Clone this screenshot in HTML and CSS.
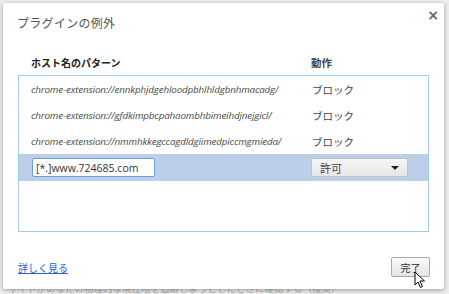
FILE: index.html
```html
<!DOCTYPE html>
<html lang="ja">
<head>
    <meta charset="UTF-8">
    <title>プラグインの例外</title>
    <link rel="stylesheet" href="styles.css">
</head>
<body>
    <div class="backdrop">
        <div class="dialog">
            <div class="title-bar">
                <h1>プラグインの例外</h1>
                <span class="close">×</span>
            </div>

            <div class="head-row">
                <span class="col-pattern">ホスト名のパターン</span>
                <span class="col-action">動作</span>
            </div>

            <div class="list">
                <div class="row">
                    <span class="col-pattern url">chrome-extension://ennkphjdgehloodpbhlhldgbnhmacadg/</span>
                    <span class="col-action">ブロック</span>
                </div>
                <div class="row">
                    <span class="col-pattern url">chrome-extension://gfdkimpbcpahaombhbimeihdjnejgicl/</span>
                    <span class="col-action">ブロック</span>
                </div>
                <div class="row">
                    <span class="col-pattern url">chrome-extension://nmmhkkegccagdldgiimedpiccmgmieda/</span>
                    <span class="col-action">ブロック</span>
                </div>
                <div class="row selected">
                    <div class="col-pattern"><input type="text" class="host-input" value="[*.]www.724685.com"></div>
                    <div class="col-action">
                        <div class="select">
                            <span>許可</span>
                            <span class="arrow"></span>
                        </div>
                    </div>
                </div>
            </div>

            <div class="footer">
                <a href="#" class="more">詳しく見る</a>
                <button class="done">完了</button>
            </div>

            <!-- mouse pointer over the done button -->
            <svg class="cursor" width="12" height="18" viewBox="0 0 12 18">
                <path d="M1 1 L1 14 L4 11 L6.5 16.5 L8.5 15.5 L6 10 L10.5 10 Z" fill="#fff" stroke="#000" stroke-width="1" stroke-linejoin="round"/>
            </svg>
        </div>
        <p class="behind">サイトがあなたの物理的な現在地を追跡しようとしたときに確認する（推奨）</p>
    </div>
</body>
</html>
```

FILE: styles.css
```css
body {
    margin: 0;
    background: #ededed;
    font-family: "Noto Sans CJK JP", "Noto Sans", sans-serif;
    font-size: 12px;
    color: #333;
    overflow: hidden;
}
.backdrop {
    width: 449px;
    height: 294px;
    padding: 3px 0 0 3px;
    box-sizing: border-box;
    position: relative;
}
.dialog {
    width: 441px;
    height: 286px;
    box-sizing: border-box;
    background: #fff;
    border-radius: 2px;
    box-shadow: 0 1px 4px rgba(0, 0, 0, 0.35);
    padding: 0 15px 0 15px;
    position: relative;
    z-index: 1;
}
.title-bar {
    display: flex;
    justify-content: space-between;
    align-items: flex-start;
    height: 51px;
}
h1 {
    margin: 11px 0 0 -1px;
    font-size: 12px;
    letter-spacing: 0.3px;
    font-weight: normal;
    color: #555;
}
.close {
    margin: 4px -10px 0 0;
    font-size: 14px;
    font-weight: bold;
    color: #666;
    font-family: "DejaVu Sans", sans-serif;
}
.head-row {
    display: flex;
    height: 21px;
    font-weight: bold;
    font-size: 10px;
    color: #222;
    padding-left: 13px;
    padding-top: 1px;
    box-sizing: border-box;
}
.head-row .col-pattern {
    width: 280px;
}
.list {
    height: 157px;
    border: 1px solid #a6c8ee;
    box-sizing: border-box;
}
.row {
    display: flex;
    align-items: center;
    height: 26px;
    padding-left: 12px;
}
.col-pattern {
    width: 281px;
}
.url {
    font-family: "Open Sans", sans-serif;
    font-style: italic;
    font-size: 9.8px;
    color: #4a4a4a;
    letter-spacing: -0.15px;
}
.col-action {
    color: #444;
    font-size: 10.5px;
}
.row.selected {
    background: #bccfe8;
    height: 27px;
}
.host-input {
    width: 123px;
    height: 19px;
    box-sizing: border-box;
    border: 1px solid #6b9de0;
    border-radius: 2px;
    padding: 0 3px;
    font-family: "Open Sans", sans-serif;
    font-size: 10.5px;
    color: #333;
    background: #fff;
    margin-left: 1px;
}
.select {
    width: 97px;
    height: 19px;
    box-sizing: border-box;
    border: 1px solid #c3c3c3;
    border-radius: 2px;
    background: linear-gradient(#f6f6f6, #e6e6e6);
    display: flex;
    align-items: center;
    justify-content: space-between;
    padding: 0 8px 0 8px;
    font-size: 11px;
    color: #444;
    margin-left: -1px;
}
.arrow {
    width: 0;
    height: 0;
    border-left: 4px solid transparent;
    border-right: 4px solid transparent;
    border-top: 4px solid #222;
}
.footer {
    display: flex;
    justify-content: space-between;
    align-items: center;
    margin-top: 25px;
}
.more {
    color: #2a61c9;
    font-size: 10px;
    margin-top: 1px;
}
.done {
    width: 39px;
    height: 20px;
    padding: 0;
    margin-right: -1px;
    border: 1px solid #a9a9a9;
    border-radius: 2px;
    background: linear-gradient(#fafafa, #e5e5e5);
    font-family: "Noto Sans CJK JP", sans-serif;
    font-size: 10px;
    color: #333;
}
.cursor {
    position: absolute;
    left: 411px;
    top: 268px;
    z-index: 2;
}
.behind {
    position: absolute;
    left: 8px;
    top: 282px;
    margin: 0;
    font-size: 9.5px;
    line-height: 12px;
    color: #aaa;
    white-space: nowrap;
}
```
